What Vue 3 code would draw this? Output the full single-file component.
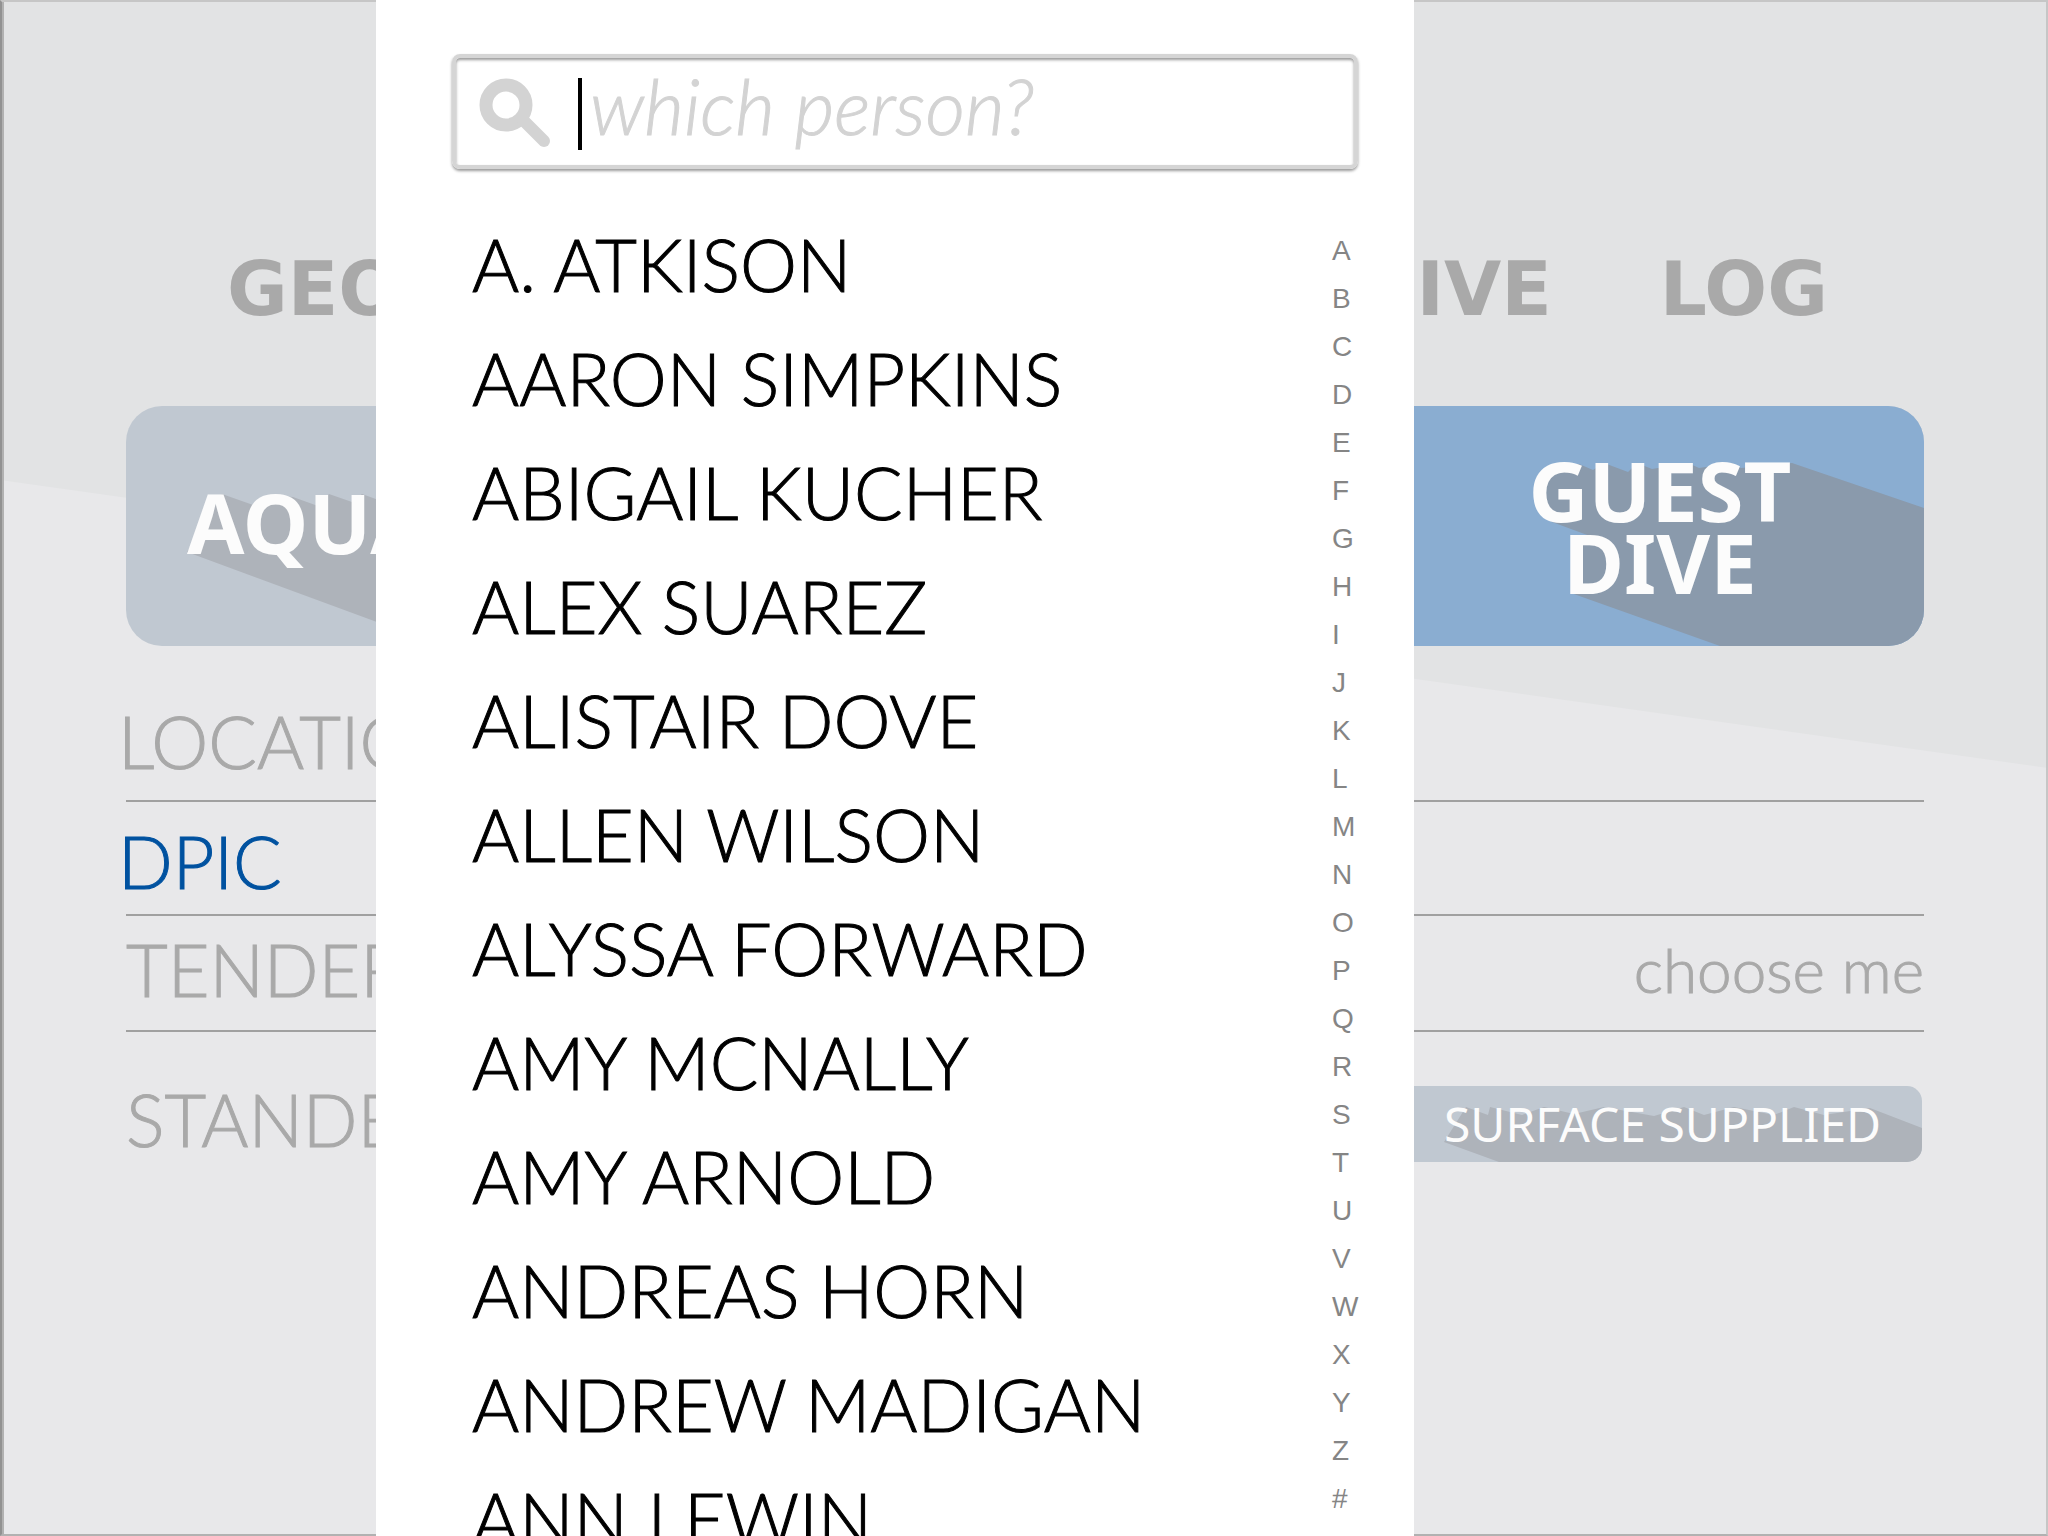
<script setup>
import { ref } from 'vue'

const query = ref('')
const people = [
  'A. ATKISON',
  'AARON SIMPKINS',
  'ABIGAIL KUCHER',
  'ALEX SUAREZ',
  'ALISTAIR DOVE',
  'ALLEN WILSON',
  'ALYSSA FORWARD',
  'AMY MCNALLY',
  'AMY ARNOLD',
  'ANDREAS HORN',
  'ANDREW MADIGAN',
  'ANN LEWIN',
]
const letters = [...'ABCDEFGHIJKLMNOPQRSTUVWXYZ#']
</script>

<template>
  <div class="screen">
    <svg class="backdrop" viewBox="0 0 2048 1536" preserveAspectRatio="none" aria-hidden="true">
      <path d="M0 0H2048V768L0 480Z" fill="#e2e3e4" />
    </svg>

    <main class="log">
      <h1 class="title">
        <span>GEORGIA</span>
        <span class="title-end"><span>DIVE</span><span>LOG</span></span>
      </h1>

      <div class="dive-types">
        <button type="button" class="dive aquarium">
          <svg class="shade" width="635" height="240" viewBox="0 0 635 240" aria-hidden="true">
            <path d="M61 146L96 88L130 100L142 89L167 91L192 100L203 88L226 96L236 88L635 233V240H316Z" fill="#aeb3ba" />
          </svg>
          <span>AQUARIUM</span>
        </button>
        <button type="button" class="dive guest">
          <svg class="shade" width="528" height="240" viewBox="0 0 528 240" aria-hidden="true">
            <path d="M156 116L142 104V76L160 60L183 58L197 64L208 57L232 66L241 57L256 63L292 57L303 62L336 57L345 62L396 57L528 102V240H324L175 187V130H194Z" fill="#8a9aac" />
          </svg>
          <span>GUEST<br>DIVE</span>
        </button>
      </div>

      <section class="rows">
        <div class="row location"><span>LOCATION</span></div>
        <div class="row dpic"><span>DPIC</span></div>
        <div class="row tender">
          <span>TENDER</span>
          <button type="button" class="choose">choose me</button>
        </div>
        <div class="row standby">
          <span>STANDBY</span>
          <button type="button" class="supply">
            <svg class="shade" width="528" height="76" viewBox="0 0 528 76" aria-hidden="true">
              <path d="M50 56L72 21L94 29L96 21L128 29L150 21L180 28L210 21L260 30L290 21L310 29L340 21L380 29L400 21L430 29L476 22L528 42V76H105Z" fill="#aeb3ba" />
            </svg>
            <span>SURFACE SUPPLIED</span>
          </button>
        </div>
      </section>
    </main>

    <div class="overlay">
      <section class="picker" role="dialog" aria-label="Choose a person">
        <label class="search">
          <svg class="glass" width="72" height="72" viewBox="0 0 72 72" aria-hidden="true">
            <circle cx="27" cy="27" r="20" fill="none" stroke="#d3d3d3" stroke-width="13" />
            <path d="M43 41L65 63" stroke="#d3d3d3" stroke-width="12" stroke-linecap="round" />
          </svg>
          <span class="caret"></span>
          <input v-model="query" type="text" placeholder="which person?" aria-label="Person">
        </label>
        <div class="lists">
          <ul class="people">
            <li v-for="person in people" :key="person">{{ person }}</li>
          </ul>
          <nav class="index" aria-label="Index">
            <a v-for="letter in letters" :key="letter" :href="'#' + letter">{{ letter }}</a>
          </nav>
        </div>
      </section>
    </div>
  </div>
</template>

<style>
body {
  margin: 0;
}
</style>

<style scoped>
.screen {
  position: relative;
  box-sizing: border-box;
  height: 100vh;
  overflow: hidden;
  background: #e8e8ea;
  font-family: Lato, "Liberation Sans", sans-serif;
  font-weight: 300;
  color: #a9a9a9;
}
.screen::after {
  content: "";
  position: absolute;
  inset: 0;
  border: 2px solid #b1b1b1;
  border-top-color: #c6c6c6;
  border-right-color: #c6c6c6;
  border-left-color: #929292;
  box-shadow: inset 2px 0 #b1b1b1;
  pointer-events: none;
}
.backdrop {
  position: absolute;
  width: 100%;
  height: 100%;
}
.log {
  position: relative;
  padding: 240px 124px 0 126px;
}
button {
  border: 0;
  padding: 0;
  background: none;
  font: inherit;
  color: inherit;
}
.title {
  display: flex;
  justify-content: space-between;
  margin: 0 96px 68px 101px;
  font: bold 74px/98px "DejaVu Sans", sans-serif;
}
.title-end {
  display: flex;
  gap: 108px;
}
.dive-types {
  display: flex;
  height: 240px;
  border-radius: 36px;
  overflow: hidden;
  background: #c0c8d1;
}
.dive {
  position: relative;
  font: 700 83px/72px "Noto Sans", sans-serif;
  color: #fcfcfc;
}
.dive span,
.supply span {
  position: relative;
}
.aquarium {
  flex: 1;
  padding: 0 0 8px 61px;
  text-align: left;
}
.guest {
  width: 528px;
  background: #8aadd1;
}
.shade {
  position: absolute;
  left: 0;
  top: 0;
}
.row {
  display: flex;
  justify-content: space-between;
  align-items: flex-start;
  border-bottom: 2px solid #a0a0a0;
  font-size: 72px;
  line-height: 84px;
  -webkit-text-stroke: 1px currentColor;
}
.location {
  padding: 53px 0 17px;
  text-indent: -8px;
}
.dpic {
  padding: 17px 0 11px;
  color: #0052a0;
  text-indent: -8px;
}
.tender {
  padding: 11px 0 19px;
}
.standby {
  padding-top: 45px;
  border-bottom: 0;
}
.choose {
  font-size: 62px;
}
.supply {
  position: relative;
  width: 528px;
  height: 76px;
  margin: 9px 2px 0 0;
  padding-left: 50px;
  border-radius: 15px;
  overflow: hidden;
  background: #c0c8d1;
  font: 400 48px/76px "Noto Sans", sans-serif;
  color: #fcfcfc;
  text-align: left;
  -webkit-text-stroke: 0;
}
.overlay {
  position: absolute;
  inset: 0;
  z-index: 1;
  display: grid;
  grid-template-columns: 376fr 1038fr 634fr;
}
.picker {
  grid-column: 2;
  display: flex;
  flex-direction: column;
  min-height: 0;
  overflow: hidden;
  box-sizing: border-box;
  padding: 54px 56px 0 76px;
  background: #fff;
  color: #000;
}
.search {
  display: flex;
  align-items: center;
  flex: none;
  box-sizing: border-box;
  height: 115px;
  padding: 5px 0 0 23px;
  border: 4px solid #d5d5d5;
  border-radius: 8px;
  box-shadow: 0 2px 3px #999, inset 0 2px 3px #999;
}
.glass {
  flex: none;
}
.caret {
  flex: none;
  width: 4px;
  height: 72px;
  margin: 0 8px 0 27px;
  background: #000;
}
.search input {
  flex: 1;
  min-width: 0;
  border: 0;
  outline: 0;
  padding: 0 0 18px;
  background: none;
  font: italic 300 77px/84px Lato, sans-serif;
}
.search input::placeholder {
  color: #d3d3d3;
  opacity: 1;
  -webkit-text-stroke: 1px #d3d3d3;
}
.lists {
  display: flex;
  justify-content: space-between;
  padding-left: 20px;
}
.people {
  margin: 38px 0 0;
  padding: 0;
  list-style: none;
  font-size: 72px;
  line-height: 114px;
  white-space: nowrap;
  -webkit-text-stroke: 1px #000;
}
.index {
  display: flex;
  flex-direction: column;
  width: 26px;
  padding-top: 58px;
  font: 28px/48px "Liberation Sans", sans-serif;
}
.index a {
  color: #858585;
  text-decoration: none;
}
</style>
